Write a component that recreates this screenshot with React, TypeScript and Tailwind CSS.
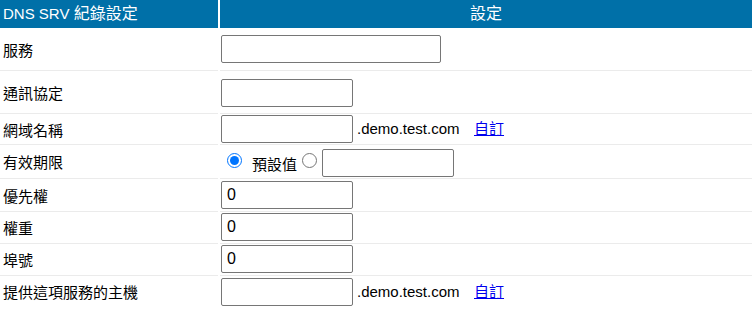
import React from 'react';

const font = { fontFamily: '"Liberation Sans", "Noto Sans CJK TC", sans-serif' };

function Field({ wide, value }: { wide?: boolean; value?: string }) {
  return (
    <input
      defaultValue={value}
      className={`${wide ? 'w-[220px]' : 'w-[132px]'} block h-[28px] shrink-0 border border-[#767676] rounded-[2px] bg-white pl-[5px] text-[16px] text-black outline-none`}
    />
  );
}

function Domain() {
  return (
    <div className="flex items-center">
      <Field />
      <span className="ml-[4px] w-[117px] text-[15px] text-black">.demo.test.com</span>
      <a href="#" className="text-[15px] text-[#0000ee] underline">自訂</a>
    </div>
  );
}

function Row({ label, h, pt, last, children }: { label: string; h: string; pt: string; last?: boolean; children: React.ReactNode }) {
  const line = last ? '' : 'border-b border-[#ebebeb]';
  return (
    <div className={`flex gap-[2px] shrink-0 ${h}`}>
      <div className={`w-[218px] shrink-0 flex items-center pl-[3px] pt-[4px] text-[15px] text-black ${line}`}>{label}</div>
      <div className={`flex-1 flex items-start pl-[1px] ${pt} ${line}`}>{children}</div>
    </div>
  );
}

export default function App() {
  return (
    <div style={font} className="w-[752px] h-[318px] bg-white overflow-hidden flex flex-col">
      <div className="flex gap-[2px] h-[28px] shrink-0">
        <div className="w-[218px] shrink-0 bg-[#0070a8] text-white text-[16px] flex items-center pl-[3px]">
          <span className="text-[15px]">DNS SRV</span>&nbsp;紀錄設定
        </div>
        <div className="flex-1 bg-[#0070a8] text-white text-[16px] flex items-center justify-center">設定</div>
      </div>
      <Row label="服務" h="h-[43px]" pt="pt-[7px]"><Field wide /></Row>
      <Row label="通訊協定" h="h-[43px]" pt="pt-[8px]"><Field /></Row>
      <Row label="網域名稱" h="h-[31px]" pt="pt-[1px]"><Domain /></Row>
      <Row label="有效期限" h="h-[34px]" pt="pt-[4px]">
        <div className="flex items-center">
          <input type="radio" name="ttl" defaultChecked className="ml-[6px] w-[15px] h-[15px] -mt-[6px] accent-[#0075ff]" />
          <span className="ml-[10px] mt-[4px] text-[15px] text-black">預設值</span>
          <input type="radio" name="ttl" className="ml-[5px] w-[15px] h-[15px] -mt-[6px]" />
          <div className="ml-[5px]"><Field /></div>
        </div>
      </Row>
      <Row label="優先權" h="h-[33px]" pt="pt-[2px]"><Field value="0" /></Row>
      <Row label="權重" h="h-[32px]" pt="pt-[1px]"><Field value="0" /></Row>
      <Row label="埠號" h="h-[32px]" pt="pt-[1px]"><Field value="0" /></Row>
      <Row label="提供這項服務的主機" h="h-[31px]" pt="pt-[2px]" last><Domain /></Row>
    </div>
  );
}
